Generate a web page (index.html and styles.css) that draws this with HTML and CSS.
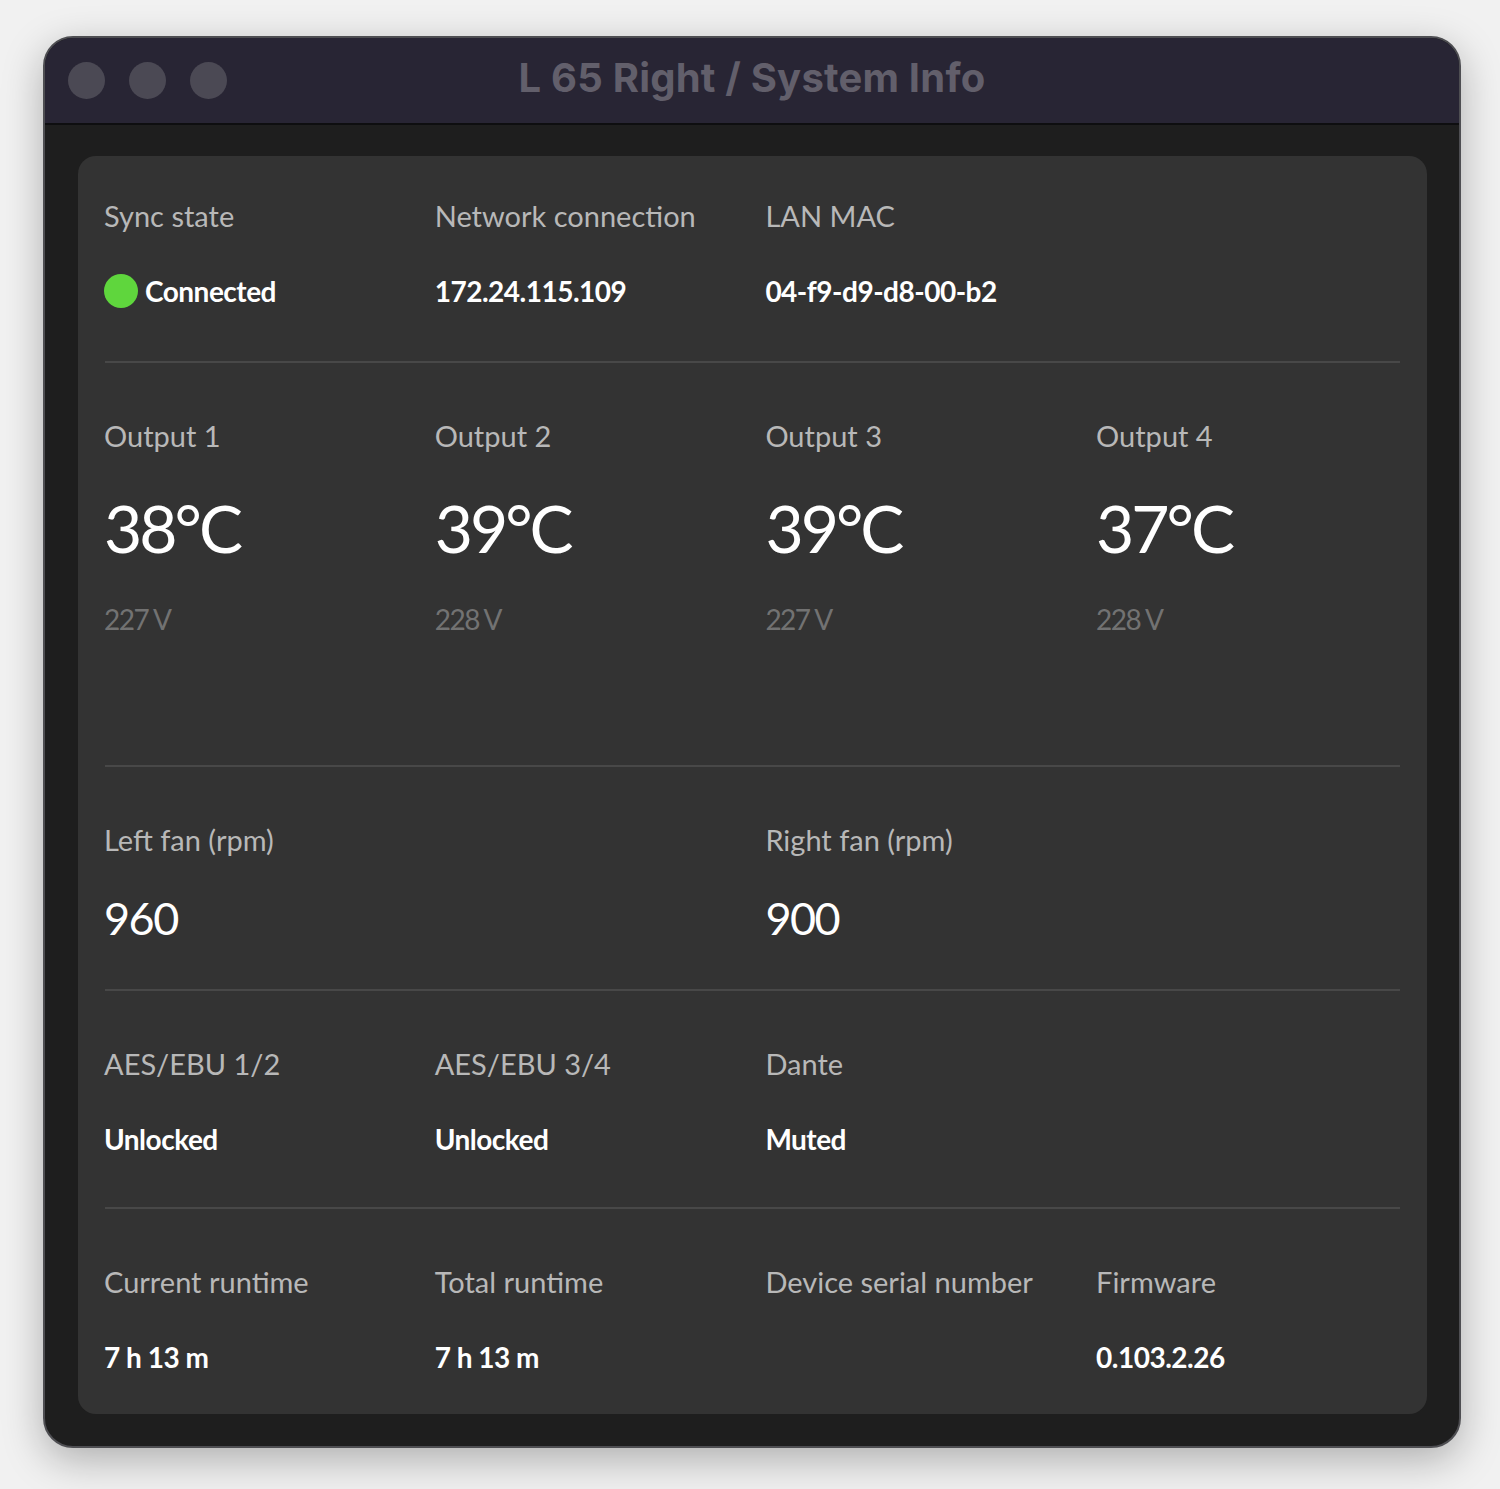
FILE: index.html
```html
<!DOCTYPE html>
<html>
<head>
<meta charset="utf-8">
<link rel="stylesheet" href="styles.css">
</head>
<body>
<div class="window">
  <div class="titlebar">
    <div class="lights"><span class="light"></span><span class="light"></span><span class="light"></span></div>
    <div class="title">L 65 Right / System Info</div>
    <div></div>
  </div>
  <div class="content">
    <div class="card">
      <section class="row row-first">
        <div class="cell"><div class="label">Sync state</div><div class="value"><span class="dot"></span>Connected</div></div>
        <div class="cell"><div class="label">Network connection</div><div class="value">172.24.115.109</div></div>
        <div class="cell"><div class="label">LAN MAC</div><div class="value">04-f9-d9-d8-00-b2</div></div>
      </section>
      <section class="row row-temps">
        <div class="cell"><div class="label">Output 1</div><div class="temp">38°C</div><div class="volt">227 V</div></div>
        <div class="cell"><div class="label">Output 2</div><div class="temp">39°C</div><div class="volt">228 V</div></div>
        <div class="cell"><div class="label">Output 3</div><div class="temp">39°C</div><div class="volt">227 V</div></div>
        <div class="cell"><div class="label">Output 4</div><div class="temp">37°C</div><div class="volt">228 V</div></div>
      </section>
      <section class="row row-fans">
        <div class="cell span2"><div class="label">Left fan (rpm)</div><div class="fan">960</div></div>
        <div class="cell span2"><div class="label">Right fan (rpm)</div><div class="fan">900</div></div>
      </section>
      <section class="row row-audio">
        <div class="cell"><div class="label">AES/EBU 1/2</div><div class="value">Unlocked</div></div>
        <div class="cell"><div class="label">AES/EBU 3/4</div><div class="value">Unlocked</div></div>
        <div class="cell"><div class="label">Dante</div><div class="value">Muted</div></div>
      </section>
      <section class="row row-last">
        <div class="cell"><div class="label">Current runtime</div><div class="value">7 h 13 m</div></div>
        <div class="cell"><div class="label">Total runtime</div><div class="value">7 h 13 m</div></div>
        <div class="cell"><div class="label">Device serial number</div><div class="value"></div></div>
        <div class="cell"><div class="label">Firmware</div><div class="value">0.103.2.26</div></div>
      </section>
    </div>
  </div>
</div>
</body>
</html>
```
FILE: styles.css
```css
html, body {
  margin: 0;
  padding: 0;
}
body {
  background: #f1f1f1;
  padding: 36px 0 0 43px;
  height: 1489px;
  box-sizing: border-box;
  font-family: Lato, "Liberation Sans", sans-serif;
}
.window {
  width: 1418px;
  height: 1412px;
  box-sizing: border-box;
  border: 2px solid #4e4e52;
  border-radius: 30px;
  overflow: hidden;
  background: #1e1e1e;
  box-shadow: 0 12px 40px rgba(0, 0, 0, 0.28);
  display: flex;
  flex-direction: column;
}
.titlebar {
  height: 85px;
  flex: none;
  background: #282534;
  border-bottom: 2px solid #0e0e10;
  display: grid;
  grid-template-columns: 1fr auto 1fr;
  align-items: center;
}
.lights {
  display: flex;
  gap: 24px;
  padding-left: 23px;
}
.light {
  width: 37px;
  height: 37px;
  border-radius: 50%;
  background: #4b4954;
}
.title {
  font-family: Inter, "Noto Sans", sans-serif;
  font-weight: 700;
  font-size: 40px;
  line-height: 48px;
  margin-top: -5px;
  color: #625f6b;
  letter-spacing: 0.2px;
}
.content {
  flex: 1;
  padding: 31px 32px 32px 33px;
  display: flex;
}
.card {
  flex: 1;
  background: #333333;
  border-radius: 18px;
  padding: 0 27px;
  display: flex;
  flex-direction: column;
}
.row {
  display: grid;
  grid-template-columns: repeat(4, 302px);
  column-gap: 28.7px;
  border-bottom: 2px solid #484848;
  padding-top: 56px;
}
.row-first { padding-top: 43px; padding-bottom: 53px; }
.row-temps { padding-bottom: 129px; }
.row-fans { padding-bottom: 43px; }
.row-audio { padding-bottom: 51px; }
.row-last { border-bottom: none; }
.span2 { grid-column: span 2; }
.cell {
  display: flex;
  flex-direction: column;
  white-space: nowrap;
  margin-left: -1px;
}
.label {
  font-size: 29px;
  line-height: 34px;
  color: #b8b8b8;
  letter-spacing: 0;
}
.value {
  font-size: 28px;
  line-height: 34px;
  height: 34px;
  font-weight: 700;
  color: #ffffff;
  margin-top: 41px;
  display: flex;
  align-items: center;
  letter-spacing: -0.5px;
}
.dot {
  width: 34px;
  height: 34px;
  border-radius: 50%;
  background: #5fd63d;
  margin-right: 7px;
}
.temp {
  font-size: 66px;
  line-height: 80px;
  color: #ffffff;
  margin-top: 35px;
  letter-spacing: -3px;
}
.volt {
  font-size: 28px;
  line-height: 34px;
  color: #727272;
  margin-top: 34px;
  letter-spacing: -1.5px;
}
.fan {
  font-size: 45px;
  line-height: 56px;
  color: #ffffff;
  margin-top: 33px;
  letter-spacing: -1.5px;
}
```
